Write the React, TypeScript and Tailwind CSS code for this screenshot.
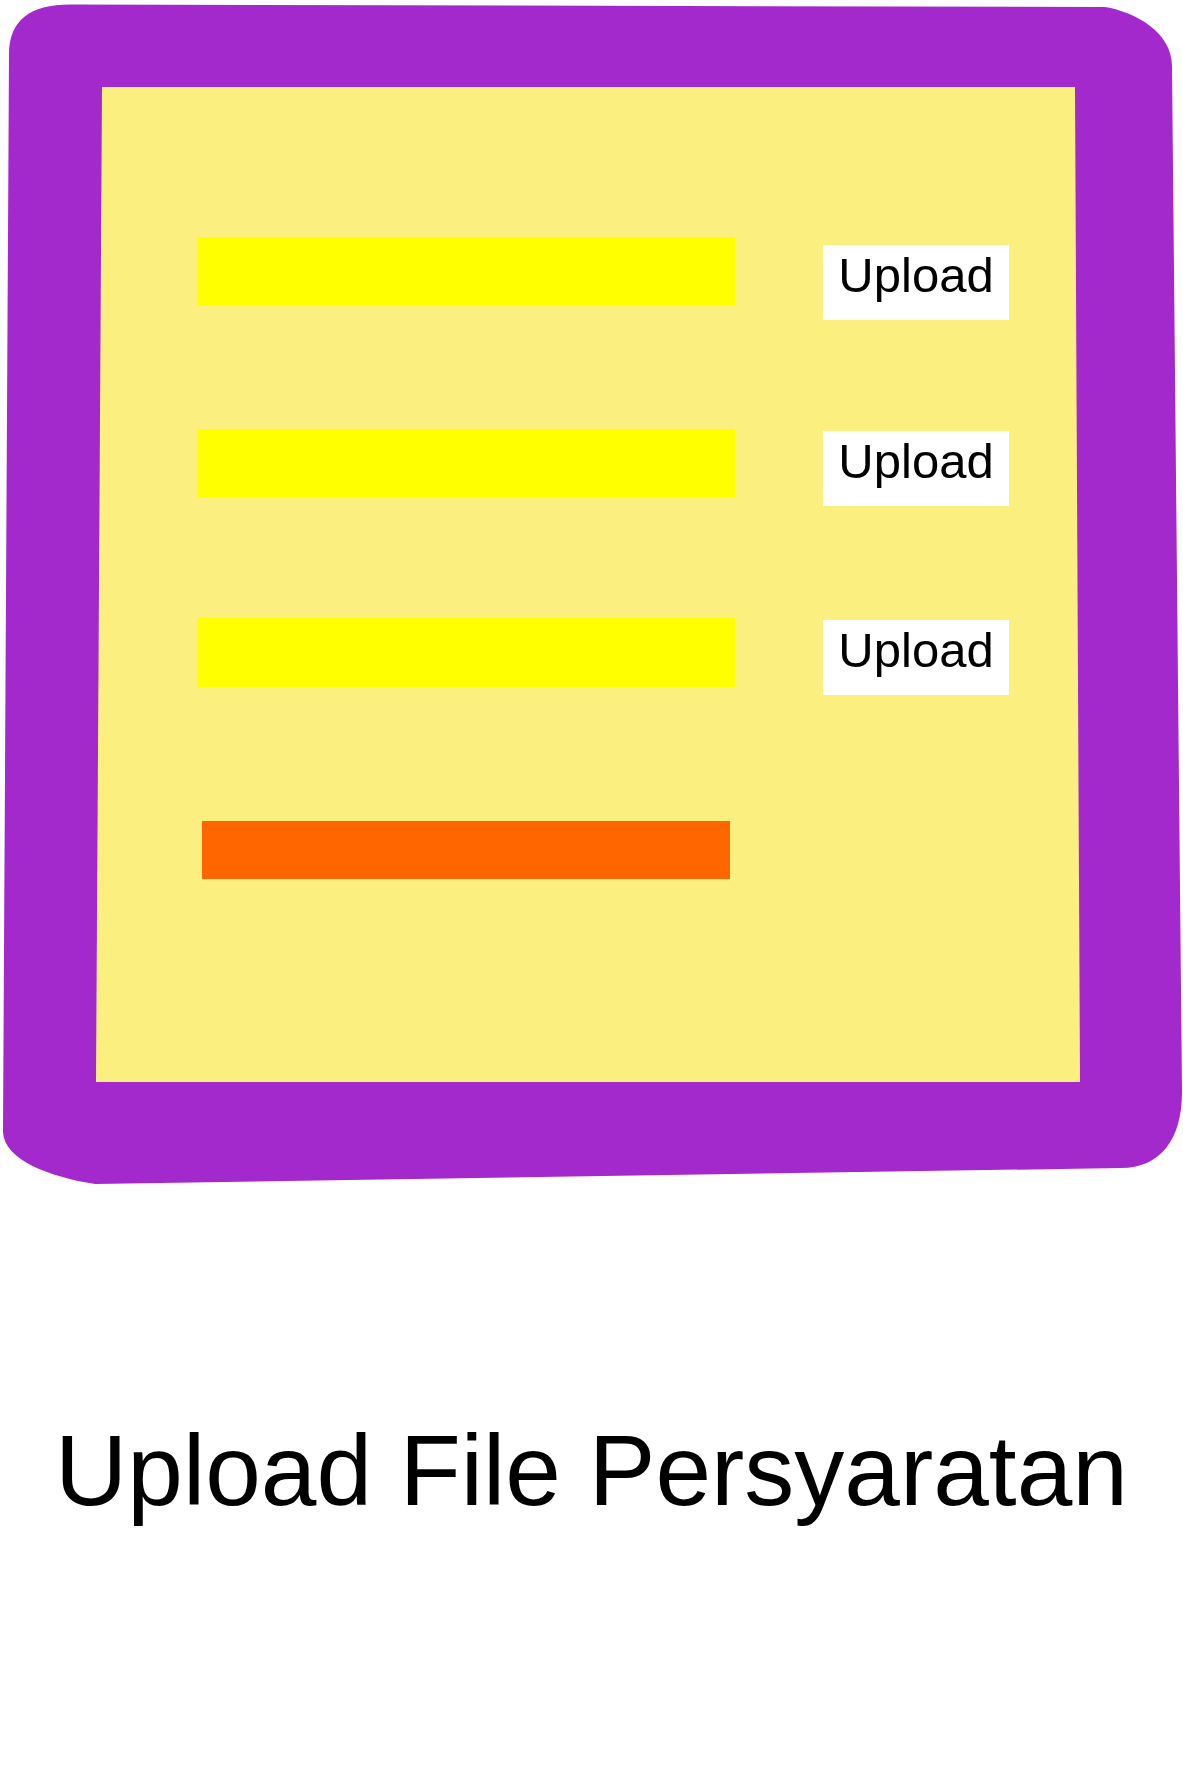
import React from "react";

const font = { fontFamily: '"Liberation Sans", Arial, sans-serif' };

function UploadButton({ className = "" }: { className?: string }) {
  return (
    <div
      className={`w-[186px] h-[75px] bg-white flex justify-center pt-[6px] text-[49px] leading-none text-black ${className}`}
    >
      Upload
    </div>
  );
}

function Bar() {
  return <div className="w-[538px] h-[69px] bg-[#ffff00] shrink-0" />;
}

export default function App() {
  return (
    <div className="w-[1183px] h-[1775px] bg-white relative overflow-hidden" style={font}>
      <svg
        className="absolute top-0 left-0"
        width="1183"
        height="1200"
        viewBox="0 0 1183 1200"
      >
        <path
          d="M 9 55 C 9 20, 30 4.5, 70 4.5 L 1105 7 C 1135 12, 1172 32, 1172 66 L 1182 1092 C 1182 1140, 1160 1168, 1121 1168 L 95 1184 C 50 1177, 4 1160, 3 1132 Z"
          fill="#a329cc"
        />
        <polygon points="102,87 1075,87 1080,1082 96,1082" fill="#fbef80" />
      </svg>

      <div className="relative flex flex-col pl-[197px] pt-[237px]">
        <div className="flex items-start h-[83px]">
          <Bar />
          <UploadButton className="ml-[88px] mt-[8px]" />
        </div>
        <div className="flex items-start h-[77px] mt-[109px]">
          <Bar />
          <UploadButton className="ml-[88px] mt-[2px]" />
        </div>
        <div className="flex items-start h-[77px] mt-[112px]">
          <Bar />
          <UploadButton className="ml-[88px] mt-[2px]" />
        </div>
        <div className="ml-[5px] mt-[126px] w-[528px] h-[58px] bg-[#ff6600]" />
      </div>

      <div className="relative mt-[541px] text-center text-[100px] leading-none text-black">
        Upload File Persyaratan
      </div>
    </div>
  );
}
